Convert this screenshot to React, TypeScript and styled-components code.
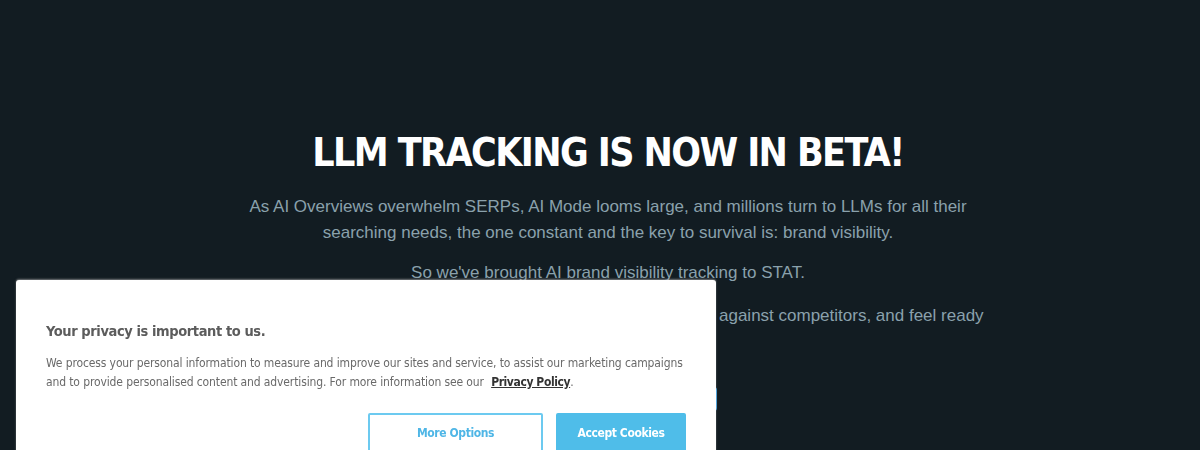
import React from "react";
import styled, { createGlobalStyle } from "styled-components";

const Global = createGlobalStyle`
  html, body { margin: 0; padding: 0; background: #121c22; }
  body { overflow: hidden; }
`;

const Page = styled.main`
  min-height: 450px;
  background: #121c22;
  display: flex;
  flex-direction: column;
  align-items: center;
  padding: 129px 0 0 16px;
  box-sizing: border-box;
`;

const Title = styled.h1`
  margin: 0 0 17px;
  font-family: "Liberation Sans Narrow", "DejaVu Sans Condensed", "Liberation Sans", sans-serif;
  font-weight: 700;
  font-size: 39px;
  line-height: 48px;
  color: #ffffff;
  letter-spacing: -1.6px;
`;

const Body = styled.div`
  width: 760px;
  display: flex;
  flex-direction: column;
  align-items: center;
  gap: 14px;
`;

const Para = styled.p<{ $extra?: number }>`
  margin: ${(p) => (p.$extra ? `${p.$extra}px 0 0` : "0")};
  font-family: "Liberation Sans", Arial, sans-serif;
  font-size: 17px;
  line-height: 26px;
  color: #8aa1ac;
  text-align: center;
`;

const Cta = styled.a`
  display: block;
  margin-top: 18px;
  width: 218px;
  height: 24px;
  border: 2px solid #3f9fe0;
  border-radius: 3px;
  box-sizing: border-box;
`;

const Dialog = styled.section`
  position: fixed;
  left: 16px;
  top: 280px;
  width: 700px;
  height: 200px;
  background: #ffffff;
  border-radius: 3px;
  box-shadow: 0 -1px 2px rgba(180, 180, 180, 0.6);
  padding: 41px 30px 0;
  box-sizing: border-box;
  font-family: "Liberation Sans Narrow", "DejaVu Sans Condensed", "Liberation Sans", sans-serif;
`;

const DialogTitle = styled.h2`
  margin: 0 0 13px;
  font-size: 14.5px;
  line-height: 20px;
  font-weight: 700;
  letter-spacing: -0.4px;
  color: #5c5c5c;
`;

const DialogText = styled.p`
  margin: 0;
  font-size: 12px;
  line-height: 19px;
  letter-spacing: -0.12px;
  color: #6a6a6a;
`;

const PolicyLink = styled.a`
  margin-left: 4px;
  color: #333333;
  font-weight: 700;
  letter-spacing: -0.4px;
  text-decoration: underline;
`;

const Actions = styled.div`
  display: flex;
  justify-content: flex-end;
  gap: 13px;
  margin-top: 21px;
`;

const Button = styled.button<{ $primary?: boolean }>`
  height: 40px;
  width: ${(p) => (p.$primary ? "130px" : "175px")};
  border: 2px solid ${(p) => (p.$primary ? "#4fbde9" : "#6ccaf0")};
  background: ${(p) => (p.$primary ? "#4fbde9" : "#ffffff")};
  color: ${(p) => (p.$primary ? "#ffffff" : "#4fb6e6")};
  border-radius: 2px;
  font-family: "Liberation Sans Narrow", "DejaVu Sans Condensed", "Liberation Sans", sans-serif;
  font-weight: 700;
  font-size: 12px;
  letter-spacing: -0.4px;
  padding: 0;
  cursor: pointer;
`;

export default function App() {
  return (
    <>
      <Global />
      <Page>
        <Title>LLM TRACKING IS NOW IN BETA!</Title>
        <Body>
          <Para>
            As AI Overviews overwhelm SERPs, AI Mode looms large, and millions turn to LLMs for all their
            searching needs, the one constant and the key to survival is: brand visibility.
          </Para>
          <Para>So we've brought AI brand visibility tracking to STAT.</Para>
          <Para $extra={3}>
            Now you can monitor your brand across AI answers, benchmark against competitors, and feel ready
            for what comes next.
          </Para>
          <Cta />
        </Body>
      </Page>
      <Dialog>
        <DialogTitle>Your privacy is important to us.</DialogTitle>
        <DialogText>
          We process your personal information to measure and improve our sites and service, to assist our
          marketing campaigns and to provide personalised content and advertising. For more information see
          our <PolicyLink href="#">Privacy Policy</PolicyLink>.
        </DialogText>
        <Actions>
          <Button>More Options</Button>
          <Button $primary>Accept Cookies</Button>
        </Actions>
      </Dialog>
    </>
  );
}
